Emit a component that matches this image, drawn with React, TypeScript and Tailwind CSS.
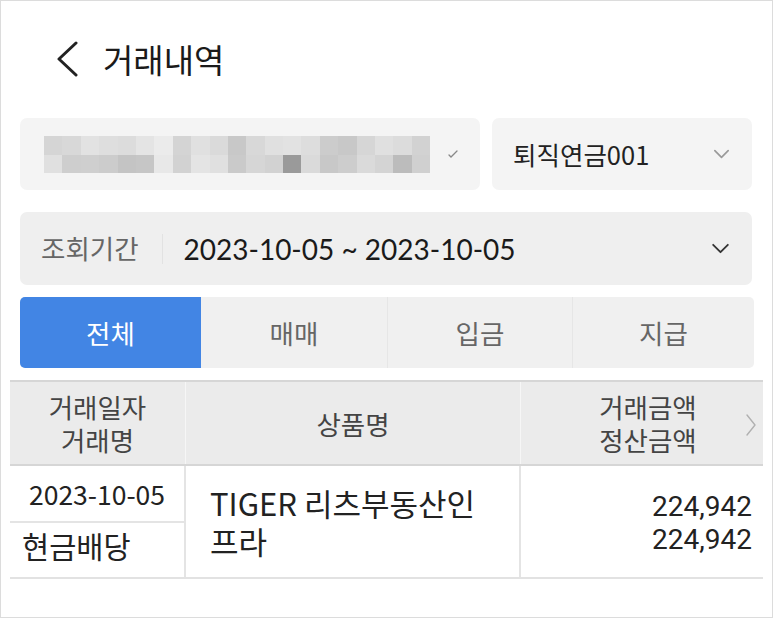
import React from "react";

const row1 = [
  "bg-[#d5d5d5]","bg-[#d8d8d8]","bg-[#e2e2e2]","bg-[#dedede]","bg-[#dcdcdc]","bg-[#e4e4e4]","bg-[#ebebeb]","bg-[#d4d4d4]","bg-[#e0e0e0]","bg-[#dadada]","bg-[#c8c8c8]","bg-[#d8d8d8]","bg-[#e0e0e0]","bg-[#e2e2e2]","bg-[#dddddd]","bg-[#cccccc]","bg-[#c8c8c8]","bg-[#d6d6d6]","bg-[#e0e0e0]","bg-[#dcdcdc]","bg-[#d2d2d2]",
];
const row2 = [
  "bg-[#e0e0e0]","bg-[#cecece]","bg-[#cfcfcf]","bg-[#cccccc]","bg-[#c4c4c4]","bg-[#c6c6c6]","bg-[#e8e8e8]","bg-[#d2d2d2]","bg-[#e4e4e4]","bg-[#e0e0e0]","bg-[#cacaca]","bg-[#d6d6d6]","bg-[#d2d2d2]","bg-[#9a9a9a]","bg-[#dadada]","bg-[#c8c8c8]","bg-[#cdcdcd]","bg-[#dadada]","bg-[#d4d4d4]","bg-[#bcbcbc]","bg-[#d0d0d0]",
];

function ChevronDown({ className }: { className?: string }) {
  return (
    <svg viewBox="0 0 20 12" className={className} fill="none" stroke="currentColor" strokeWidth="2" strokeLinecap="round" strokeLinejoin="round">
      <path d="M2 2l8 8 8-8" />
    </svg>
  );
}

export default function App() {
  const font = "font-['Noto_Sans_CJK_KR','Lato',sans-serif]";
  return (
    <div className={`w-[773px] h-[618px] border border-[#dcdcdc] bg-white overflow-hidden ${font}`}>
      {/* header */}
      <div className="flex items-center h-[76px] pt-[40px] pl-[54px]">
        <svg viewBox="0 0 24 36" className="w-[24px] h-[36px] text-[#222]" fill="none" stroke="currentColor" strokeWidth="3" strokeLinecap="round" strokeLinejoin="round">
          <path d="M21 2L4 18l17 16" />
        </svg>
        <span className="ml-[24px] text-[33px] leading-none text-[#1a1a1a]">거래내역</span>
      </div>

      {/* selects */}
      <div className="flex gap-[12px] pl-[19px] pr-[20px] mt-[41px]">
        <div className="w-[460px] h-[72px] rounded-[7px] bg-[#f4f4f4] flex items-center pl-[24px]">
          <div className="flex flex-col">
            <div className="flex">
              {row1.map((c, i) => (
                <div key={i} className={`w-[18.4px] h-[19px] ${c}`} />
              ))}
            </div>
            <div className="flex">
              {row2.map((c, i) => (
                <div key={i} className={`w-[18.4px] h-[18px] ${c}`} />
              ))}
            </div>
          </div>
          <svg viewBox="0 0 10 8" className="ml-[18px] w-[10px] h-[8px] text-[#888]" fill="none" stroke="currentColor" strokeWidth="1.3" strokeLinecap="round">
            <path d="M1 5l2 2 6-6" />
          </svg>
        </div>
        <div className="flex-1 h-[72px] rounded-[7px] bg-[#f4f4f4] flex items-center justify-between pl-[21px] pr-[22px]">
          <span className="text-[25.5px] text-[#222] leading-none">퇴직연금001</span>
          <ChevronDown className="w-[17px] h-[10px] text-[#9a9a9a]" />
        </div>
      </div>

      {/* period */}
      <div className="mx-[19px] mr-[20px] mt-[22px] h-[73px] rounded-[7px] bg-[#efefef] flex items-center pl-[21px] pr-[22px]">
        <span className="text-[26.5px] text-[#666] leading-none">조회기간</span>
        <div className="ml-[23px] w-px h-[30px] bg-[#e2e2e2]" />
        <span className="ml-[21px] text-[28px] text-[#1a1a1a] leading-none font-['Lato','Noto_Sans_CJK_KR',sans-serif]">2023-10-05 ~ 2023-10-05</span>
        <ChevronDown className="ml-auto w-[19px] h-[11px] text-[#333]" />
      </div>

      {/* tabs */}
      <div className="ml-[19px] mr-[18px] mt-[12px] h-[71px] grid grid-cols-[181px_186px_185px_1fr] rounded-[5px] overflow-hidden bg-[#f0f0f0]">
        <div className="bg-[#4285e4] flex items-center justify-center text-white text-[26.5px]">전체</div>
        <div className="flex items-center justify-center text-[#666] text-[26.5px]">매매</div>
        <div className="flex items-center justify-center text-[#666] text-[26.5px] border-l border-[#e6e6e6]">입금</div>
        <div className="flex items-center justify-center text-[#666] text-[26.5px] border-l border-[#e6e6e6]">지급</div>
      </div>

      {/* table */}
      <div className="ml-[9px] mr-[9px] mt-[12px]">
        <div className="grid grid-cols-[176px_335px_1fr] h-[86px] bg-[#ebebeb] border-t-2 border-b-2 border-[#d6d6d6] text-[#444] text-[26.5px] leading-[33px]">
          <div className="flex flex-col items-center justify-center border-r border-[#f6f6f6]">
            <span>거래일자</span>
            <span>거래명</span>
          </div>
          <div className="flex items-center justify-center border-r border-[#f6f6f6]">상품명</div>
          <div className="relative flex flex-col items-center justify-center pl-[12px]">
            <span>거래금액</span>
            <span>정산금액</span>
            <svg viewBox="0 0 10 22" className="absolute right-[7px] top-[32px] w-[10px] h-[22px] text-[#b0b0b0]" fill="none" stroke="currentColor" strokeWidth="1.4" strokeLinecap="round" strokeLinejoin="round">
              <path d="M1 1l8 10-8 10" />
            </svg>
          </div>
        </div>
        <div className="grid grid-cols-[176px_335px_1fr] h-[113px] border-b-2 border-[#e2e2e2]">
          <div className="flex flex-col border-r-2 border-[#e4e4e4]">
            <div className="h-[57px] flex items-center justify-center border-b-2 border-[#e4e4e4] text-[26.5px] text-[#222]">2023-10-05</div>
            <div className="flex-1 flex items-center pl-[12px] pb-[10px] text-[29.5px] text-[#222]">현금배당</div>
          </div>
          <div className="flex items-center pl-[24px] pr-[4px] text-[31px] leading-[38px] text-[#222] border-r-2 border-[#e4e4e4]">
            <span>TIGER 리츠부동산인<br />프라</span>
          </div>
          <div className="flex flex-col items-end justify-center pr-[11px] pt-[3px] text-[28px] leading-[33px] text-[#222] font-['Roboto',sans-serif]">
            <span>224,942</span>
            <span>224,942</span>
          </div>
        </div>
      </div>
    </div>
  );
}
